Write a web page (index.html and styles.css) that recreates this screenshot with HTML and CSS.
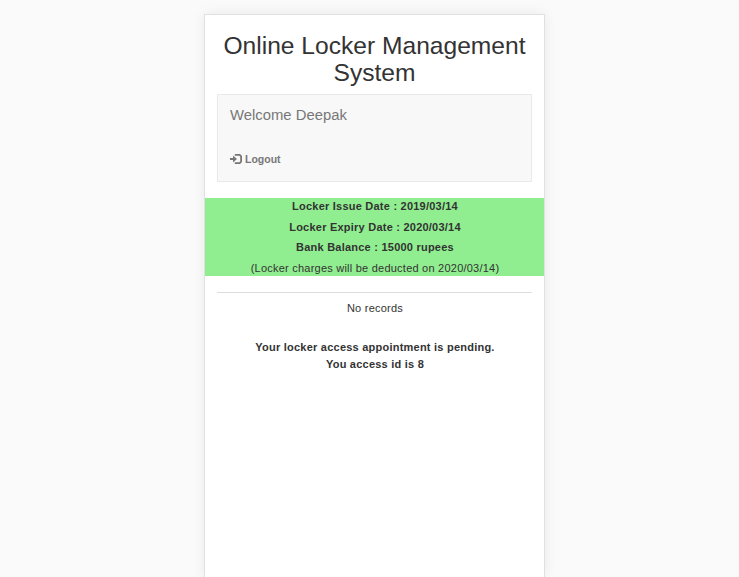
FILE: index.html
```html
<!DOCTYPE html>
<html lang="en">
<head>
<meta charset="utf-8">
<title>Online Locker Management System</title>
<link rel="stylesheet" href="styles.css">
</head>
<body>
<main class="container">
  <h1 class="title">Online Locker Management System</h1>
  <nav class="navbar">
    <div class="brand">Welcome Deepak</div>
    <a class="logout"><svg class="icon" viewBox="0 0 12 10" aria-hidden="true"><path d="M0 4h3V1.6L7 5 3 8.4V6H0z"/><path d="M4.8 .9H9.7L11.1 2.3V7.7L9.7 9.1H4.8" fill="none" stroke="currentColor" stroke-width="1.8"/></svg><span>Logout</span></a>
  </nav>
  <section class="summary">
    <p><b>Locker Issue Date : 2019/03/14</b></p>
    <p><b>Locker Expiry Date : 2020/03/14</b></p>
    <p><b>Bank Balance : 15000 rupees</b></p>
    <p>(Locker charges will be deducted on 2020/03/14)</p>
  </section>
  <hr class="rule">
  <p class="empty">No records</p>
  <p class="status">Your locker access appointment is pending.<br>You access id is 8</p>
</main>
</body>
</html>
```
FILE: styles.css
```css
* { box-sizing: border-box; }
body {
  display: flow-root;
  margin: 0;
  background: #fafafa;
  color: #333;
  font: 11px/17px "Liberation Sans", Arial, sans-serif;
  letter-spacing: .23px;
  height: 577px;
}
.container {
  width: 341px;
  height: 563px;
  margin: 14px 0 0 204px;
  padding: 17px 12px 0;
  border: 1px solid #e0e0e0;
  border-bottom: 0;
  background: #fff;
  box-shadow: 0 0 12px rgba(0, 0, 0, .07);
  text-align: center;
}
.title { margin: 0 0 8px; font-size: 24.6px; line-height: 27px; font-weight: 400; letter-spacing: 0; }
.navbar {
  height: 88px;
  padding: 11px 12px;
  border: 1px solid #e9e9e9;
  background: #f8f8f8;
  color: #777;
  text-align: left;
  letter-spacing: 0;
}
.brand { font-size: 14.85px; line-height: 18px; }
.logout { display: flex; align-items: center; gap: 3px; margin-top: 27px; font-size: 10.5px; font-weight: 700; }
.icon { width: 12px; height: 10px; fill: currentColor; position: relative; top: -1px; }
.summary { margin: 16px -12px; height: 78px; background: #90ee90; }
.summary p { margin: 0 0 3.7px; padding-left: 1px; }
.rule { margin: 0; border: 0; border-top: 1px solid #ddd; }
.empty { margin: 7px 0 22px; padding-left: 1px; }
.status { margin: 0; padding-left: 1px; font-weight: 700; }
```
